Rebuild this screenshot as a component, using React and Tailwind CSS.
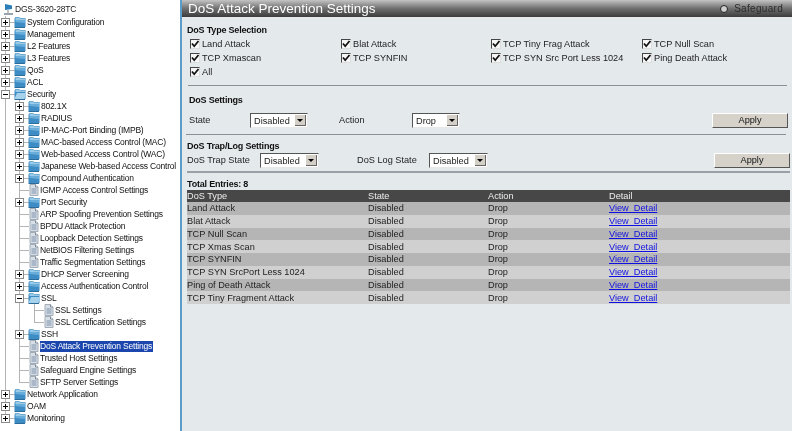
const Folder = ({ open }) => (
  <svg width="12" height="12" viewBox="0 0 12 12" className="shrink-0">
    <path d="M0.5 2.5 L1.5 1 L5 1 L6 2 L11.5 2 L11.5 11 L0.5 11 Z" fill="#3d8cc4" />
    <path d="M1.5 1.5 L5 1.5 L6 2.5 L11 2.5 L11 4 L1.5 4 Z" fill="#9ccbe8" />
    {open ? (
      <path d="M0.5 11 L3 5 L12 5 L10.5 11 Z" fill="#a6d2ec" />
    ) : (
      <path d="M1.5 4 L11 4 L11 7 L1.5 6 Z" fill="#69aedb" />
    )}
    <path d="M0.5 11.5 H11" stroke="#2c6c9c" />
  </svg>
);

const Page = () => (
  <svg width="10" height="12" viewBox="0 0 10 12" className="shrink-0">
    <path d="M1 0.5 L6.5 0.5 L9 3 L9 11.5 L1 11.5 Z" fill="#d8dee6" stroke="#a3adb8" />
    <path d="M6.5 0.5 L6.5 3 L9 3" fill="#fff" stroke="#7f8c9a" />
    <path d="M2.5 5 H7.5 M2.5 7 H7.5 M2.5 9 H7.5" stroke="#7c93ad" />
  </svg>
);

const Toggle = ({ open }) => (
  <span className="relative block w-[9px] h-[9px] border border-[#8a8a8a] bg-white shrink-0">
    <span className="absolute left-[1px] top-[3px] w-[5px] h-px bg-black" />
    {!open && <span className="absolute left-[3px] top-[1px] w-px h-[5px] bg-black" />}
  </span>
);

// guides: x of the vertical tree lines drawn through this row
const TreeRow = ({ x, guides = [], last, toggle, open, folder, selected, label }) => (
  <div className="relative flex items-center h-3">
    {guides.map((g) => (
      <span key={g} className="absolute top-0 bottom-0 w-px bg-[#b4b4b4]" style={{ left: g }} />
    ))}
    <span
      className={`absolute top-0 w-px bg-[#b4b4b4] ${last ? 'h-1.5' : 'h-3'}`}
      style={{ left: x + 4 }}
    />
    <span className="absolute top-1.5 w-[10px] h-px bg-[#b4b4b4]" style={{ left: x + 4 }} />
    {toggle && (
      <span className="absolute top-[2px]" style={{ left: x }}>
        <Toggle open={open} />
      </span>
    )}
    <span className="flex items-center relative" style={{ marginLeft: x + (folder ? 13 : 14) }}>
      {folder ? <Folder open={open} /> : <Page />}
      <span
        className={`ml-px pr-px leading-[11px] whitespace-nowrap ${selected ? 'bg-[#1a46ad] text-white' : 'text-[#111]'}`}
      >
        {label}
      </span>
    </span>
  </div>
);

const tree = [
  { x: 1, folder: true, toggle: true, label: 'System Configuration' },
  { x: 1, folder: true, toggle: true, label: 'Management' },
  { x: 1, folder: true, toggle: true, label: 'L2 Features' },
  { x: 1, folder: true, toggle: true, label: 'L3 Features' },
  { x: 1, folder: true, toggle: true, label: 'QoS' },
  { x: 1, folder: true, toggle: true, label: 'ACL' },
  { x: 1, folder: true, toggle: true, open: true, label: 'Security' },
  ...[
    ['802.1X', 1],
    ['RADIUS', 1],
    ['IP-MAC-Port Binding (IMPB)', 1],
    ['MAC-based Access Control (MAC)', 1],
    ['Web-based Access Control (WAC)', 1],
    ['Japanese Web-based Access Control', 1],
    ['Compound Authentication', 1],
    ['IGMP Access Control Settings', 0],
    ['Port Security', 1],
    ['ARP Spoofing Prevention Settings', 0],
    ['BPDU Attack Protection', 0],
    ['Loopback Detection Settings', 0],
    ['NetBIOS Filtering Settings', 0],
    ['Traffic Segmentation Settings', 0],
    ['DHCP Server Screening', 1],
    ['Access Authentication Control', 1],
  ].map(([label, f]) => ({ x: 15, folder: !!f, toggle: !!f, label, guides: [5] })),
  { x: 15, folder: true, toggle: true, open: true, label: 'SSL', guides: [5] },
  { x: 30, label: 'SSL Settings', guides: [5, 19] },
  { x: 30, label: 'SSL Certification Settings', guides: [5, 19], last: true },
  { x: 15, folder: true, toggle: true, label: 'SSH', guides: [5] },
  { x: 15, label: 'DoS Attack Prevention Settings', selected: true, guides: [5] },
  { x: 15, label: 'Trusted Host Settings', guides: [5] },
  { x: 15, label: 'Safeguard Engine Settings', guides: [5] },
  { x: 15, label: 'SFTP Server Settings', guides: [5], last: true },
  { x: 1, folder: true, toggle: true, label: 'Network Application' },
  { x: 1, folder: true, toggle: true, label: 'OAM' },
  { x: 1, folder: true, toggle: true, label: 'Monitoring', last: true },
];

const Check = ({ label }) => (
  <label className="flex items-center gap-[2px] h-[14px]">
    <span className="relative w-[10px] h-[10px] -mt-[2px] border-t border-l border-[#444] border-r border-b border-r-[#ddd] border-b-[#ddd] bg-[#f6f6f6] shrink-0">
      <svg width="9" height="9" viewBox="0 0 9 9" className="absolute top-0 left-0">
        <path d="M1 3.5 L3.2 6.2 L7.5 1" fill="none" stroke="#111" strokeWidth="1.8" />
      </svg>
    </span>
    <span className="whitespace-nowrap">{label}</span>
  </label>
);

const Select = ({ value, w }) => (
  <span
    className={`${w} h-[15px] flex items-center justify-between bg-white border-t border-l border-[#555] border-r border-b border-r-[#e8e8e8] border-b-[#e8e8e8] pl-[3px] pr-px`}
  >
    <span className="leading-3">{value}</span>
    <span className="w-[11px] h-[11px] bg-[#d4d0c8] border-r border-b border-[#666] flex items-center justify-center">
      <span className="w-0 h-0 border-x-[3px] border-x-transparent border-t-[3px] border-t-black" />
    </span>
  </span>
);

const Apply = () => (
  <button className="w-[76px] h-[15px] bg-[#d6d2ca] border-t border-l border-white border-r border-b border-r-[#555] border-b-[#555] leading-3 text-[#111]">
    Apply
  </button>
);

const Heading = ({ children }) => (
  <div className="font-bold text-[9px] tracking-[-0.2px] text-[#111] leading-3">{children}</div>
);

const rows = [
  'Land Attack',
  'Blat Attack',
  'TCP Null Scan',
  'TCP Xmas Scan',
  'TCP SYNFIN',
  'TCP SYN SrcPort Less 1024',
  'Ping of Death Attack',
  'TCP Tiny Fragment Attack',
];

const cols = 'grid grid-cols-[181px_120px_121px_1fr] items-center';

export default function App() {
  return (
    <div
      className="flex w-[792px] h-[431px] overflow-hidden bg-white text-[#222] blur-[0.3px]"
      style={{ fontFamily: '"Liberation Sans", Arial, sans-serif' }}
    >
      <aside className="w-[180px] shrink-0 pt-[2px] text-[8.5px] tracking-[-0.2px] overflow-hidden">
        <div className="flex items-center h-[14px] pl-[4px]">
          <svg width="10" height="13" viewBox="0 0 10 13" className="shrink-0">
            <path d="M1 1 L8 2.5 L8 6 L1 7 Z" fill="#2a7fb8" />
            <path d="M0 10 H9 V12 H0 Z" fill="#9aa4ae" />
            <path d="M4 7 V10" stroke="#8a8a8a" />
          </svg>
          <span className="leading-3 pl-px">DGS-3620-28TC</span>
        </div>
        {tree.map((row) => (
          <TreeRow key={row.label} {...row} />
        ))}
      </aside>
      <div className="w-[2px] bg-[#5b9cc8] shrink-0" />
      <main className="flex-1 bg-[#e4e9ec] min-w-0 text-[9.2px]">
        <div className="h-[17px] flex items-center justify-between bg-gradient-to-b from-[#c4c4c4] via-[#707070] to-[#3c3c3c] pl-[6px] pr-[9px]">
          <span className="text-[13.5px] leading-4 text-white">DoS Attack Prevention Settings</span>
          <span className="flex items-center gap-[6px] text-[10px] text-[#2c2c2c] tracking-[0.3px]">
            <span className="w-2 h-2 rounded-full bg-[#cfcfcf] border border-[#222]" />
            Safeguard
          </span>
        </div>

        <div className="pt-[7px] pl-[5px]">
          <Heading>DoS Type Selection</Heading>
          <div className="grid grid-cols-[151px_150px_151px_1fr] pl-[3px] mt-[2px]">
            {[
              'Land Attack',
              'Blat Attack',
              'TCP Tiny Frag Attack',
              'TCP Null Scan',
              'TCP Xmascan',
              'TCP SYNFIN',
              'TCP SYN Src Port Less 1024',
              'Ping Death Attack',
              'All',
            ].map((c) => (
              <Check key={c} label={c} />
            ))}
          </div>
          <div className="h-px bg-[#8a9096] mt-[5px] ml-[1px] w-[599px]" />

          <div className="mt-2 ml-[2px]"><Heading>DoS Settings</Heading></div>
          <div className="flex items-center h-[15px] mt-[7px] ml-[2px]">
            <span className="w-[61px]">State</span>
            <Select value="Disabled" w="w-[58px]" />
            <span className="w-[73px] ml-[31px]">Action</span>
            <Select value="Drop" w="w-[48px]" />
            <span className="ml-auto mr-[4px]"><Apply /></span>
          </div>
          <div className="h-px bg-[#8a9096] mt-[6px] w-[600px] -ml-px" />

          <div className="mt-[5px]"><Heading>DoS Trap/Log Settings</Heading></div>
          <div className="flex items-center h-[15px] mt-px">
            <span className="w-[73px]">DoS Trap State</span>
            <Select value="Disabled" w="w-[59px]" />
            <span className="w-[72px] ml-[38px]">DoS Log State</span>
            <Select value="Disabled" w="w-[59px]" />
            <span className="ml-auto mr-[2px]"><Apply /></span>
          </div>
          <div className="h-[2px] bg-[#9aa0a6] mt-[3px] w-[603px]" />

          <div className="mt-[5px]"><Heading>Total Entries: 8</Heading></div>
          <div className="w-[603px]">
            <div className={`${cols} h-3 bg-[#474747] text-[#eee] leading-3`}>
              <span>DoS Type</span>
              <span>State</span>
              <span>Action</span>
              <span>Detail</span>
            </div>
            {rows.map((name, i) => (
              <div
                key={name}
                className={`${cols} h-[12.75px] leading-3 text-[#222] ${i % 2 === 0 ? 'bg-[#b5b5b5]' : 'bg-[#d0d0d0]'}`}
              >
                <span>{name}</span>
                <span>Disabled</span>
                <span>Drop</span>
                <a href="#" className="text-[#1010e0] underline whitespace-pre">View  Detail</a>
              </div>
            ))}
          </div>
        </div>
      </main>
    </div>
  );
}
